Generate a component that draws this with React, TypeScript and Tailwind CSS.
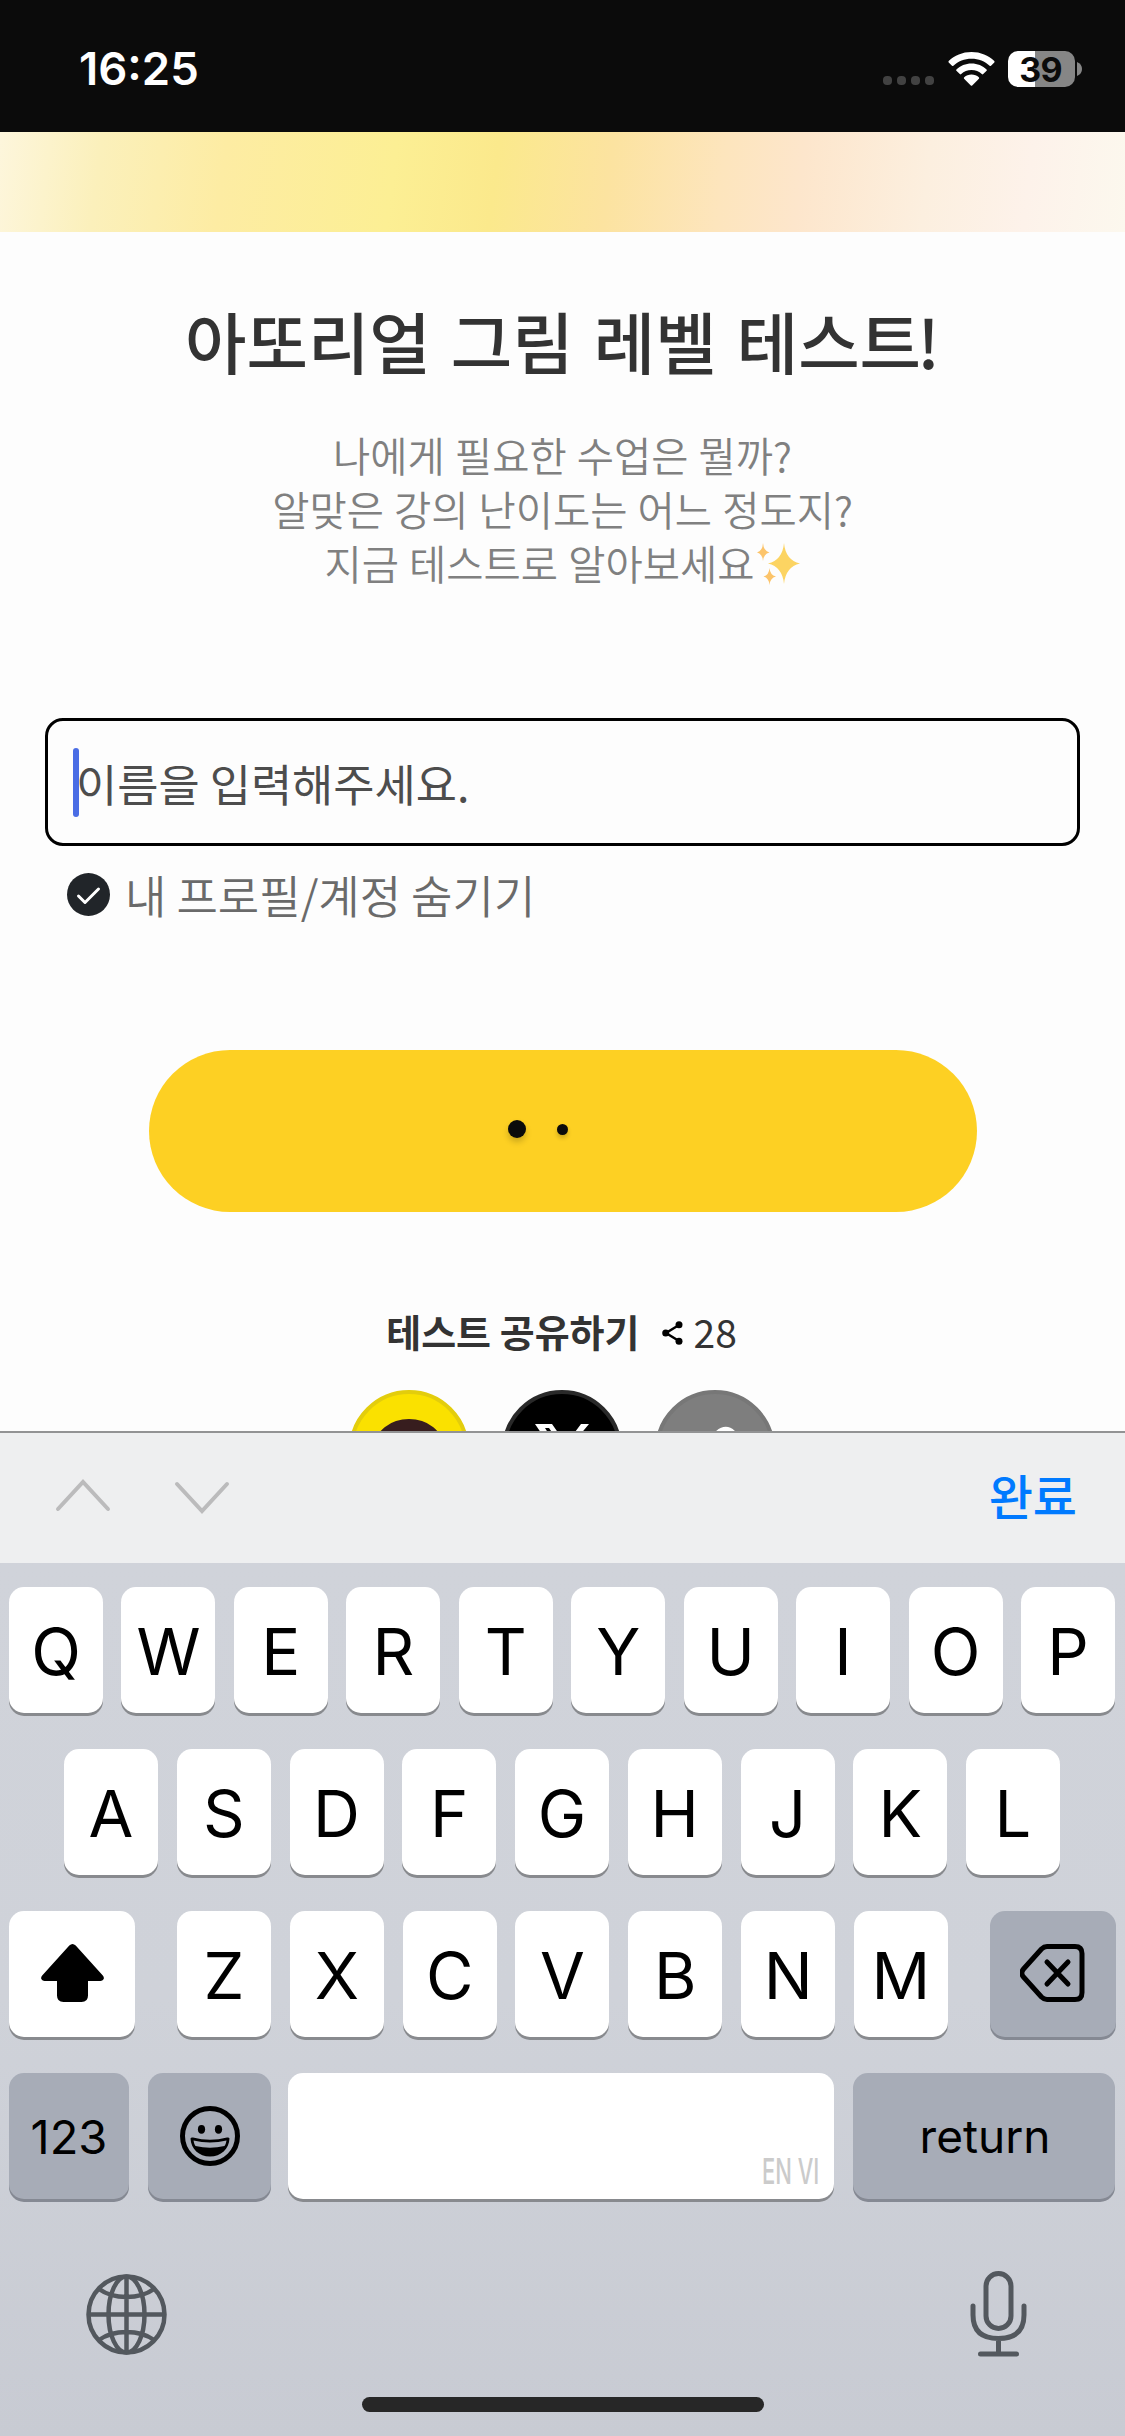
import type { ReactNode } from "react";
import clsx from "clsx";

const TOP_ROW = ["Q", "W", "E", "R", "T", "Y", "U", "I", "O", "P"];
const HOME_ROW = ["A", "S", "D", "F", "G", "H", "J", "K", "L"];
const BOTTOM_ROW = ["Z", "X", "C", "V", "B", "N", "M"];

function StatusBar() {
    return (
        <header className="flex h-[132px] items-center justify-between bg-[#0b0b0b] pl-[79px] pr-[43px] pt-[6px] text-white">
            <span className="text-[45.5px] font-semibold leading-none">16:25</span>
            <div className="flex items-center">
                <div className="mr-[14px] mt-[22px] flex gap-[5px]">
                    {[0, 1, 2, 3].map((dot) => (
                        <span key={dot} className="size-[9px] rounded-[4px] bg-[#424242]" />
                    ))}
                </div>
                <svg className="mr-[13px] h-[34px] w-[47px]" viewBox="0 0 47 34">
                    <path d="M23.5 0C32.5 0 40.6 3.4 46.3 9.1Q46.9 9.8 46.3 10.5L43 13.8Q42.3 14.4 41.6 13.8C36.9 9.3 30.5 6.7 23.5 6.7S10.1 9.3 5.4 13.8Q4.7 14.4 4 13.8L.7 10.5Q.1 9.8.7 9.1C6.4 3.4 14.5 0 23.5 0Z" fill="#fff" />
                    <path d="M23.5 11.4C29.4 11.4 34.7 13.7 38.6 17.4Q39.2 18.1 38.6 18.8L35.2 22.1Q34.5 22.7 33.8 22.1C31.1 19.7 27.5 18.1 23.5 18.1S15.9 19.7 13.2 22.1Q12.5 22.7 11.8 22.1L8.4 18.8Q7.8 18.1 8.4 17.4C12.3 13.7 17.6 11.4 23.5 11.4Z" fill="#fff" />
                    <path d="M23.5 22.6C26.3 22.6 28.9 23.6 30.8 25.3Q31.5 26 30.9 26.7L24.2 33.4Q23.5 34 22.8 33.4L16.1 26.7Q15.5 26 16.2 25.3C18.1 23.6 20.7 22.6 23.5 22.6Z" fill="#fff" />
                </svg>
                <div className="flex h-[36px] w-[67px] items-center justify-center rounded-[10px] bg-linear-to-r from-white from-40% to-[#868686] to-40%">
                    <span className="mr-[2px] mt-[2px] text-[34px] font-bold leading-none tracking-tight text-[#0b0b0b]">39</span>
                </div>
                <svg className="ml-[2px] h-[14px] w-[5px]" viewBox="0 0 5 14">
                    <path d="M0 0Q5 2 5 7T0 14Z" fill="#868686" />
                </svg>
            </div>
        </header>
    );
}

function Sparkles() {
    return (
        <svg className="ml-[3px] inline-block h-[42px] w-[43px] align-[-5px]" viewBox="0 0 43 42">
            <path d="M27 0Q28.5 17 43 20.5Q28.5 24 27 41Q25.5 24 11 20.5Q25.5 17 27 0Z" fill="#fcd462" />
            <path d="M6 0Q6.5 8 12.5 9.5Q6.5 11 6 18Q5.5 11 0 9.5Q5.5 8 6 0Z" fill="#fcc46a" />
            <path d="M12.5 25Q13 32 19 33.5Q13 35 12.5 42Q12 35 6.5 33.5Q12 32 12.5 25Z" fill="#fcc46a" />
        </svg>
    );
}

function ShareButtons() {
    return (
        <div className="mt-[32px] flex h-[41px] justify-center gap-[33px] overflow-hidden pr-[1px]">
            <div className="flex size-[120px] shrink-0 justify-center rounded-full border-4 border-[#e3cd0c] bg-[#fae100] pt-[25px]">
                <svg className="h-[60px] w-[68px]" viewBox="0 0 68 60">
                    <ellipse cx="34" cy="27" rx="34" ry="27" fill="#371d1e" />
                    <path d="M18 44L15 60L34 51Z" fill="#371d1e" />
                </svg>
            </div>
            <div className="flex size-[120px] shrink-0 justify-center rounded-full border-4 border-[#292929] bg-black pt-[30px]">
                <svg className="h-[54px] w-[54px]" viewBox="0 0 54 54">
                    <path d="M0 0H17L31 20L46 0H54L34 24L54 54H37L22 32L4 54H-2L19 28ZM10 4L39 50H46L14 4Z" fill="#fff" />
                </svg>
            </div>
            <div className="flex size-[120px] shrink-0 justify-center rounded-full border-4 border-[#777777] bg-[#7e7e7e] pt-[32px]">
                <svg className="h-[50px] w-[50px]" viewBox="0 0 50 50" fill="none" stroke="#fff" strokeWidth="7" strokeLinecap="round">
                    <path d="M21 16L28 8Q36 1 43 8T43 22L35 29Q28 35 21 29" />
                    <path d="M29 34L22 42Q14 49 7 42T7 28L15 21Q22 15 29 21" />
                </svg>
            </div>
        </div>
    );
}

function TestIntro() {
    return (
        <main className="flex h-[1299px] flex-col bg-[#fdfdfd] font-['Noto_Sans_CJK_KR',sans-serif]">
            <div className="h-[100px] shrink-0 bg-[linear-gradient(97deg,#fdf6dc_0%,#fbf0bb_9%,#fdeca3_20%,#fcef94_35%,#fbe98c_44%,#fce3a0_54%,#fde5bd_64%,#fde6cc_71%,#fcefdf_82%,#fdf2ea_91%,#fcf8ee_100%)]" />
            <h1 className="mt-[60px] text-center text-[66.8px] font-medium leading-[96px] text-[#333333] [word-spacing:5px]">
                아또리얼 그림 레벨 테스트<span className="-ml-[4px]">!</span>
            </h1>
            <p className="mt-[40px] text-center text-[40.5px] font-[350] leading-[54px] text-[#808080] [word-spacing:1px]">
                나에게 필요한 수업은 뭘까?
                <br />
                알맞은 강의 난이도는 어느 정도지?
                <br />
                지금 테스트로 알아보세요
                <Sparkles />
            </p>
            <div className="mx-[45px] mt-[128px] flex h-[128px] shrink-0 items-center rounded-[18px] border-[3px] border-black pl-[25px]">
                <span className="h-[69px] w-[6px] rounded-full bg-[#4a6de5]" />
                <span className="-ml-[3px] mt-[2px] text-[44.8px] leading-none text-[#4d4d4d]">이름을 입력해주세요.</span>
            </div>
            <label className="ml-[67px] mt-[18px] flex h-[60px] items-center">
                <svg className="size-[43px]" viewBox="0 0 43 43">
                    <circle cx="21.5" cy="21.5" r="21.5" fill="#212529" />
                    <path d="M11.5 23L18 29.5L31.5 16" fill="none" stroke="#fff" strokeWidth="3" strokeLinecap="round" strokeLinejoin="round" />
                </svg>
                <span className="ml-[15px] text-[45px] font-[350] leading-none text-[#6a6a6a]">내 프로필/계정 숨기기</span>
            </label>
            <button className="mx-auto mt-[126px] flex h-[162px] w-[828px] shrink-0 items-center rounded-full bg-[#fdd023] pb-[4px] pl-[359px]">
                <span className="size-[18px] rounded-full bg-[#0b0b0b] shadow-[0_4px_6px_rgba(0,0,0,0.2)]" />
                <span className="ml-[31px] size-[11px] rounded-full bg-[#0b0b0b] shadow-[0_3px_4px_rgba(0,0,0,0.2)]" />
            </button>
            <div className="mt-[92px] flex h-[54px] items-center justify-center text-[38px] leading-none text-[#333333]">
                <span className="font-bold">테스트 공유하기</span>
                <svg className="ml-[22px] mr-[11px] mt-[4px] h-[24px] w-[21px]" viewBox="0 0 21 24">
                    <path d="M17 4L4 12L17 20" fill="none" stroke="#000" strokeWidth="2.5" />
                    <circle cx="17" cy="3.7" r="3.5" />
                    <circle cx="3.7" cy="12" r="3.5" />
                    <circle cx="17" cy="20.3" r="3.5" />
                </svg>
                <span className="mr-[2px] text-[39px]">28</span>
            </div>
            <ShareButtons />
        </main>
    );
}

interface KeyProps {
    children?: ReactNode;
    className?: string;
    muted?: boolean;
}

function Key({ children, className = "w-[94px]", muted = false }: KeyProps) {
    return (
        <div
            className={clsx(
                "flex h-[126px] shrink-0 items-center justify-center rounded-[15px] text-black",
                muted ? "bg-[#a7acb7] shadow-[0_3px_0_#858993]" : "bg-white shadow-[0_3px_0_#888a8e]",
                className
            )}
        >
            {children}
        </div>
    );
}

function Letter({ value }: { value: string }) {
    return (
        <Key>
            <span className="mt-[2px] text-[65px] leading-none">{value}</span>
        </Key>
    );
}

function InputAccessory() {
    return (
        <div className="flex h-[132px] items-center justify-between border-t-2 border-[#929394] bg-[#eeeff0] pl-[54px] pr-[48px]">
            <svg className="mb-[4px] h-[40px] w-[178px]" viewBox="0 0 178 40" fill="none" stroke="#bbbbbc" strokeWidth="4" strokeLinecap="round">
                <path d="M4 33L29 6L54 33" />
                <path d="M123 8L148 35L173 8" />
            </svg>
            <span className="mb-[9px] font-['Noto_Sans_CJK_KR',sans-serif] text-[48px] font-medium leading-none text-[#007aff]">완료</span>
        </div>
    );
}

function Keyboard() {
    return (
        <section className="flex h-[873px] flex-col bg-linear-to-b from-[#d0d3da] via-[#cfd2d9] via-50% to-[#c8cbd3] pt-[24px]">
            <div className="flex justify-between pl-[9px] pr-[10px]">
                {TOP_ROW.map((letter) => (
                    <Letter key={letter} value={letter} />
                ))}
            </div>
            <div className="mt-[36px] flex justify-between pl-[64px] pr-[65px]">
                {HOME_ROW.map((letter) => (
                    <Letter key={letter} value={letter} />
                ))}
            </div>
            <div className="mt-[36px] flex justify-between px-[9px]">
                <Key className="w-[126px]">
                    <svg className="mb-[2px] h-[58px] w-[63px]" viewBox="0 0 63 58">
                        <path d="M28.3 1.6Q31.5-1.5 34.7 1.6L61.8 31.5Q63.5 33.5 62.5 35.3Q61.5 37 59.5 37H47V51.5Q47 58 40.5 58H22.5Q16 58 16 51.5V37H3.5Q1.5 37 .5 35.3Q-.5 33.5 1.2 31.5Z" />
                    </svg>
                </Key>
                <div className="flex w-[771px] justify-between">
                    {BOTTOM_ROW.map((letter) => (
                        <Letter key={letter} value={letter} />
                    ))}
                </div>
                <Key muted className="w-[126px]">
                    <svg className="mb-[2px] mr-[2px] h-[58px] w-[65px]" viewBox="0 0 65 58" fill="none" stroke="#000" strokeWidth="5" strokeLinecap="round" strokeLinejoin="round">
                        <path d="M27 2.5H55Q62 2.5 62 9.5V48.5Q62 55.5 55 55.5H27Q24 55.5 21.5 53L3.5 33Q0 29 3.5 25L21.5 5Q24 2.5 27 2.5Z" />
                        <path d="M27 18L48 40M48 18L27 40" />
                    </svg>
                </Key>
            </div>
            <div className="mt-[36px] flex pl-[9px]">
                <Key muted className="w-[120px]">
                    <span className="text-[47px] leading-none">123</span>
                </Key>
                <Key muted className="ml-[19px] w-[123px]">
                    <svg className="size-[60px]" viewBox="0 0 60 60">
                        <circle cx="30" cy="30" r="27.5" fill="none" stroke="#000" strokeWidth="5" />
                        <ellipse cx="21.5" cy="23.3" rx="3.6" ry="4.4" />
                        <ellipse cx="38.5" cy="23.3" rx="3.6" ry="4.4" />
                        <path d="M10.5 32.5Q11 31 13 31.5Q30 36 47 31.5Q49 31 49.5 32.5C49 43 41 50.5 30 50.5S11 43 10.5 32.5Z" />
                        <path d="M13.5 34.5Q30 38.5 46.5 34.5Q46 38 44.5 40Q30 43.5 15.5 40Q14 38 13.5 34.5Z" fill="#a7acb7" />
                    </svg>
                </Key>
                <Key className="ml-[17px] w-[546px] items-end justify-end pb-[10px] pr-[16px]">
                    <span className="w-[56px] origin-left scale-x-[0.61] whitespace-nowrap text-[36px] font-medium leading-none text-[#cbcbcb]">EN VI</span>
                </Key>
                <Key muted className="ml-[19px] w-[262px]">
                    <span className="ml-[2px] text-[46px] leading-none">return</span>
                </Key>
            </div>
            <div className="mt-[72px] flex items-center justify-between pl-[86px] pr-[98px]">
                <svg className="size-[81px]" viewBox="0 0 81 81" fill="none" stroke="#53585e" strokeWidth="4.5">
                    <circle cx="40.5" cy="40.5" r="38" />
                    <ellipse cx="40.5" cy="40.5" rx="18" ry="38" />
                    <path d="M40.5 2.5V78.5M2.5 40.5H78.5M13 15Q24 23 40.5 23T68 15M13 66Q24 58 40.5 58T68 66" />
                </svg>
                <svg className="h-[86px] w-[57px]" viewBox="0 0 57 86" fill="none" stroke="#53585e" strokeWidth="5" strokeLinecap="round">
                    <rect x="16" y="2.5" width="25" height="55" rx="12.5" />
                    <path d="M3 35V44Q3 67.5 28.5 67.5T54 44V35M28.5 68V82M10.5 83H46.5" />
                </svg>
            </div>
            <div className="ml-[362px] mt-[40px] h-[15px] w-[402px] rounded-full bg-[#272727]" />
        </section>
    );
}

export default function App() {
    return (
        <div className="h-[2436px] w-[1125px] overflow-hidden bg-[#fdfdfd] font-['Inter',sans-serif]">
            <StatusBar />
            <TestIntro />
            <InputAccessory />
            <Keyboard />
        </div>
    );
}
